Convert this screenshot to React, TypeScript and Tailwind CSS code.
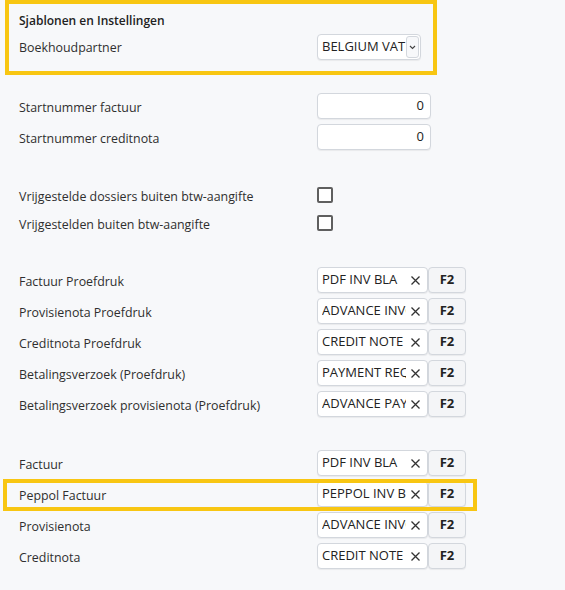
import type { ReactNode } from 'react'

const font = { fontFamily: '"Open Sans", "Noto Sans", Arial, sans-serif' }

function Row({ label, children, className = '' }: { label: string; children?: ReactNode; className?: string }) {
  return (
    <div className={`flex items-center ${className}`}>
      <div className="w-[298px] shrink-0 pt-[4px] text-[12.4px] text-[#2f2f2f]">{label}</div>
      {children}
    </div>
  )
}

function NumberInput({ value }: { value: string }) {
  return (
    <div className="flex h-[26px] w-[114px] items-center justify-end rounded-[4px] border border-[#d3d7dd] bg-white px-[6px] text-[13px] text-[#222] shadow-[0_1px_1px_rgba(0,0,0,0.06)]">
      {value}
    </div>
  )
}

function Checkbox() {
  return <div className="h-[16px] w-[16px] rounded-[2px] border-2 border-[#5f5f5f] bg-white" />
}

function Cross() {
  return (
    <svg width="11" height="11" viewBox="0 0 11 11" fill="none">
      <path d="M1.5 1.5l8 8M9.5 1.5l-8 8" stroke="#333" strokeWidth="1.3" />
    </svg>
  )
}

function TemplatePicker({ value }: { value: string }) {
  return (
    <div className="flex h-[26px] items-stretch">
      <div className="flex w-[111px] items-center rounded-[4px] border border-[#d3d7dd] bg-white pl-[4px] pr-[6px] shadow-[0_1px_1px_rgba(0,0,0,0.06)]">
        <span className="w-[84px] overflow-hidden whitespace-nowrap text-[13px] text-[#222]">{value}</span>
        <span className="ml-auto flex items-center"><Cross /></span>
      </div>
      <div className="flex w-[38px] items-center justify-center rounded-[4px] border border-[#d3d7dd] bg-[#f4f5f7] text-[13px] font-bold text-[#222] shadow-[0_1px_1px_rgba(0,0,0,0.06)]">
        F2
      </div>
    </div>
  )
}

export default function App() {
  const proof = [
    ['Factuur Proefdruk', 'PDF INV BLA'],
    ['Provisienota Proefdruk', 'ADVANCE INVOICE'],
    ['Creditnota Proefdruk', 'CREDIT NOTE BLANCO'],
    ['Betalingsverzoek (Proefdruk)', 'PAYMENT REQUEST'],
    ['Betalingsverzoek provisienota (Proefdruk)', 'ADVANCE PAYMENT'],
  ]

  return (
    <div className="h-[590px] w-[565px] overflow-hidden bg-[#f7f8fa]" style={font}>
      {/* Sjablonen header */}
      <div className="ml-[5px] w-[432px] border-4 border-[#f8c612] pb-[11px] pl-[10px] pr-[12px] pt-[7px]">
        <div className="h-[20px] text-[12px] font-semibold leading-[20px] text-[#222]">Sjablonen en Instellingen</div>
        <div className="mt-[3px] flex items-center">
          <div className="w-[298px] shrink-0 pt-[3px] text-[12.4px] text-[#2f2f2f]">Boekhoudpartner</div>
          <div className="flex h-[26px] w-[104px] items-center rounded-[4px] border border-[#d3d7dd] bg-white pl-[4px] pr-[1px] shadow-[0_1px_1px_rgba(0,0,0,0.06)]">
            <span className="w-[84px] overflow-hidden whitespace-nowrap text-[13px] text-[#222]">BELGIUM VAT</span>
            <div className="ml-auto flex h-[22px] w-[13px] items-center justify-center rounded-[3px] border border-[#d3d7dd] bg-[#f7f8fa]">
              <svg width="7" height="5" viewBox="0 0 7 5" fill="none">
                <path d="M1 1l2.5 2.5L6 1" stroke="#444" strokeWidth="1.1" />
              </svg>
            </div>
          </div>
        </div>
      </div>

      <div className="pl-[19px]">
        <div className="mt-[18px] flex flex-col gap-[5px]">
          <Row label="Startnummer factuur"><NumberInput value="0" /></Row>
          <Row label="Startnummer creditnota"><NumberInput value="0" /></Row>
        </div>

        <div className="mt-[31px] flex flex-col">
          <Row label="Vrijgestelde dossiers buiten btw-aangifte" className="h-[28px]"><Checkbox /></Row>
          <Row label="Vrijgestelden buiten btw-aangifte" className="h-[28px]"><Checkbox /></Row>
        </div>

        <div className="mt-[30px] flex flex-col gap-[5px]">
          {proof.map(([label, value]) => (
            <Row key={label} label={label}><TemplatePicker value={value} /></Row>
          ))}
        </div>

        <div className="mt-[33px] flex flex-col gap-[5px]">
          <Row label="Factuur"><TemplatePicker value="PDF INV BLA" /></Row>
          <div className="relative">
            <Row label="Peppol Factuur"><TemplatePicker value="PEPPOL INV BLANCO" /></Row>
            <div className="pointer-events-none absolute left-[-16px] top-[-2px] h-[32px] w-[474px] border-4 border-[#f8c612]" />
          </div>
          <Row label="Provisienota"><TemplatePicker value="ADVANCE INVOICE" /></Row>
          <Row label="Creditnota"><TemplatePicker value="CREDIT NOTE BLANCO" /></Row>
        </div>
      </div>
    </div>
  )
}
